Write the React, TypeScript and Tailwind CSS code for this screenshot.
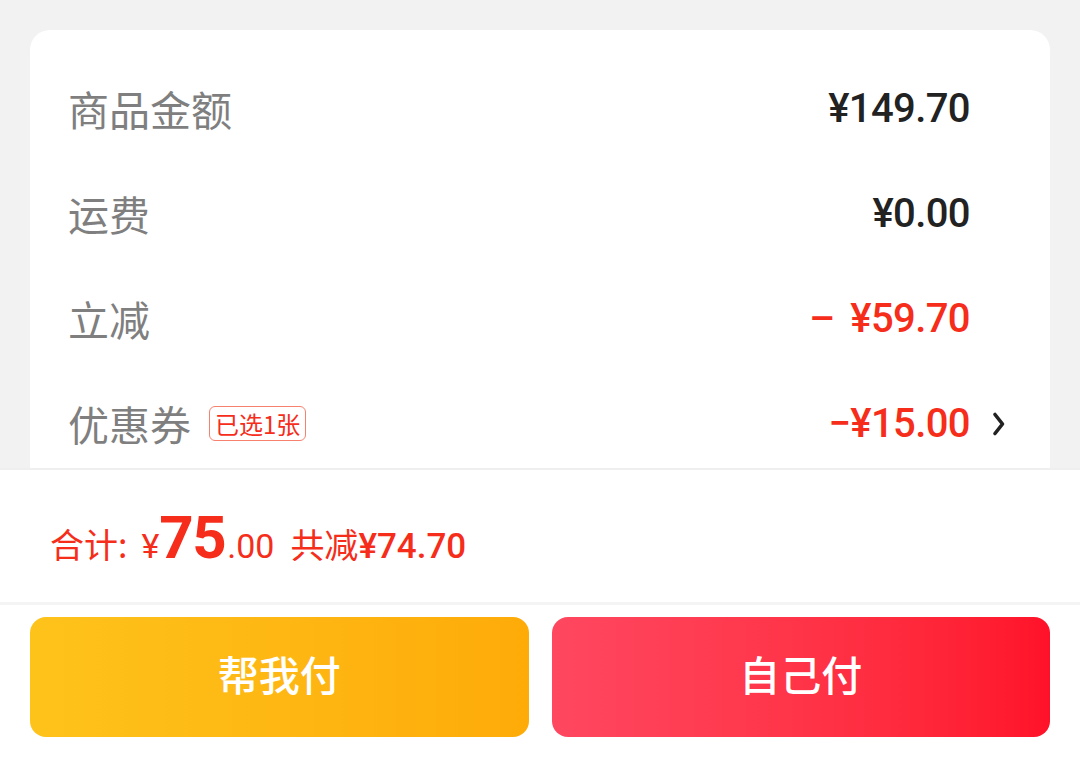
import React from "react";

const CN = { fontFamily: '"Noto Sans CJK SC", "Noto Sans", sans-serif' };
const NUM = { fontFamily: 'Roboto, "Noto Sans CJK SC", sans-serif' };

function Row({ label, badge, value, red, arrow }: { label: string; badge?: string; value: React.ReactNode; red?: boolean; arrow?: boolean }) {
  return (
    <div className="h-[105px] flex items-center pl-[38px] pr-[40px]">
      <div className="flex items-center gap-[18px]">
        <span className="text-[41px] text-[#7f7f7f] leading-none" style={CN}>{label}</span>
        {badge && (
          <span
            className="h-[35px] px-[5px] flex items-center rounded-[6px] border border-[#f7816f] text-[24px] text-[#f52d1a] leading-none"
            style={CN}
          >
            {badge}
          </span>
        )}
      </div>
      <div className="ml-auto flex items-center">
        <span
          className={`text-[40px] font-medium leading-none tracking-[-0.6px] ${red ? "text-[#f52d1a]" : "text-[#222222]"}`}
          style={NUM}
        >
          {value}
        </span>
        <span className="w-[40px] flex justify-end pr-[4px]">
          {arrow && (
            <svg width="14" height="26" viewBox="0 0 14 26" fill="none">
              <path d="M3 3.5 L10.5 13 L3 22.5" stroke="#222" strokeWidth="3.6" strokeLinecap="round" strokeLinejoin="round" />
            </svg>
          )}
        </span>
      </div>
    </div>
  );
}

export default function App() {
  return (
    <div className="w-[1080px] h-[772px] bg-[#f2f2f2] flex flex-col overflow-hidden">
      <div className="pt-[30px] px-[30px] h-[468px] shrink-0">
        <div className="h-full bg-white rounded-t-[20px] overflow-hidden pt-[26px]">
          <Row label="商品金额" value="¥149.70" />
          <Row label="运费" value="¥0.00" />
          <Row label="立减" value={<><span>–</span><span className="ml-[16px]">¥59.70</span></>} red />
          <Row label="优惠券" badge="已选1张" value="−¥15.00" red arrow />
        </div>
      </div>

      <div className="flex-1 bg-white border-t-2 border-[#efefef] flex flex-col">
        <div className="h-[132px] flex items-center pl-[50px] pt-[4px] text-[#f52d1a]">
          <div className="flex items-baseline leading-none">
            <span className="text-[34px]" style={CN}>合计:</span>
            <span className="text-[34px] ml-[14px]" style={NUM}>¥</span>
            <span className="text-[60px] font-bold tracking-[-1.5px]" style={NUM}>75</span>
            <span className="text-[34px] ml-[2px]" style={NUM}>.00</span>
            <span className="text-[34px] ml-[16px]" style={CN}>共减</span>
            <span className="text-[35px] font-medium" style={NUM}>¥74.70</span>
          </div>
        </div>
        <div className="border-t-[3px] border-[#f4f4f4] px-[30px] pt-[12px] flex gap-[23px]">
          <button
            className="h-[120px] flex-1 rounded-[16px] bg-gradient-to-r from-[#fec31b] to-[#feab08] text-white text-[41px] font-medium leading-none flex items-center justify-center pb-[8px]"
            style={CN}
          >
            帮我付
          </button>
          <button
            className="h-[120px] flex-1 rounded-[16px] bg-gradient-to-r from-[#ff4760] to-[#ff1229] text-white text-[41px] font-medium leading-none flex items-center justify-center pb-[8px]"
            style={CN}
          >
            自己付
          </button>
        </div>
      </div>
    </div>
  );
}
